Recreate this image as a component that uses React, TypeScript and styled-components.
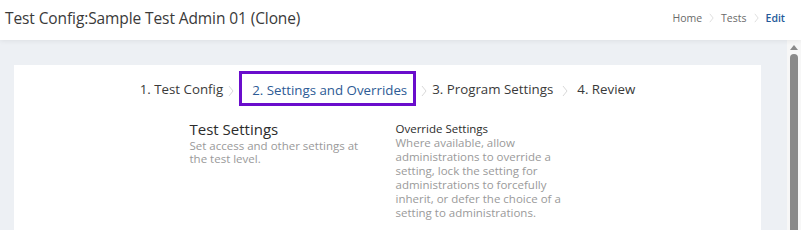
import React from "react";
import styled, { createGlobalStyle } from "styled-components";

const GlobalStyle = createGlobalStyle`
  html, body {
    margin: 0;
    padding: 0;
    height: 100%;
    overflow: hidden;
  }
  body {
    font-family: "Open Sans", "Liberation Sans", sans-serif;
    background: #edf0f4;
  }
`;

const Page = styled.div`
  display: flex;
  flex-direction: column;
  width: 801px;
  height: 230px;
`;

const Header = styled.header`
  height: 40px;
  flex: 0 0 40px;
  display: flex;
  align-items: center;
  justify-content: space-between;
  padding: 0 16px 4px 5px;
  background: #fff;
  box-shadow: 0 1px 5px rgba(0, 0, 0, 0.07);
  box-sizing: border-box;
  position: relative;
  z-index: 1;
`;

const Title = styled.h1`
  margin: 0;
  font-size: 15.5px;
  font-weight: 400;
  color: #3a3a3a;
  letter-spacing: -0.1px;
`;

const Crumbs = styled.nav`
  display: flex;
  align-items: center;
  gap: 7px;
  font-size: 10.5px;
`;

const Crumb = styled.span<{ $active?: boolean }>`
  color: ${(p) => (p.$active ? "#245a9a" : "#6a6a6a")};
  font-weight: ${(p) => (p.$active ? 600 : 400)};
`;

const ChevronIcon = styled.svg<{ $size?: number }>`
  width: ${(p) => (p.$size ?? 6)}px;
  height: ${(p) => (p.$size ?? 6) * 2}px;
  display: block;
`;

const Chevron = ({ size }: { size?: number }) => (
  <ChevronIcon $size={size} viewBox="0 0 6 12" aria-hidden>
    <path d="M1 1 L5 6 L1 11" fill="none" stroke="#d9d9d9" strokeWidth="1" />
  </ChevronIcon>
);

const Body = styled.div`
  flex: 1;
  display: flex;
  min-height: 0;
`;

const Main = styled.main`
  flex: 1;
  padding: 25px 26px 0 14px;
  min-width: 0;
`;

const Card = styled.section`
  background: #fff;
  height: 100%;
  padding-top: 6px;
  box-sizing: border-box;
`;

const Stepper = styled.ol`
  list-style: none;
  margin: 0;
  padding: 0;
  display: flex;
  align-items: center;
  justify-content: center;
  gap: 5px;
`;

const Step = styled.li<{ $current?: boolean }>`
  font-size: 13.3px;
  color: ${(p) => (p.$current ? "#2d5b95" : "#3a3a3a")};
  height: 35px;
  box-sizing: border-box;
  display: flex;
  align-items: center;
  padding: 3px ${(p) => (p.$current ? "6px 0 10px" : "0")};
  border: ${(p) => (p.$current ? "3px solid #6a0dcc" : "none")};
`;

const StepSep = styled.li<{ $wide?: boolean }>`
  padding-top: 4px;
  margin: 0 ${(p) => (p.$wide ? "4px" : "0")};
`;

const Columns = styled.div`
  display: grid;
  grid-template-columns: 186px 190px;
  column-gap: 20px;
  justify-content: center;
  margin-top: 14px;
`;

const Block = styled.div`
  display: flex;
  flex-direction: column;
`;

const Heading = styled.h2<{ $small?: boolean }>`
  margin: 0;
  font-size: ${(p) => (p.$small ? "11.5px" : "15px")};
  font-weight: 500;
  color: #2c2c2c;
  line-height: ${(p) => (p.$small ? "15px" : "19px")};
  margin-top: ${(p) => (p.$small ? "1px" : "0")};
`;

const Desc = styled.p<{ $tight?: boolean }>`
  margin: 0;
  font-size: 11.5px;
  color: #9a9a9a;
  line-height: ${(p) => (p.$tight ? "13px" : "14px")};
`;

const Scrollbar = styled.div`
  width: 14px;
  flex: 0 0 14px;
  background: #f7f7f7;
  display: flex;
  flex-direction: column;
  align-items: center;
  padding-top: 5px;
  gap: 4px;
  box-sizing: border-box;
`;

const Arrow = styled.div`
  width: 0;
  height: 0;
  border-left: 4px solid transparent;
  border-right: 4px solid transparent;
  border-bottom: 5px solid #8a8a8a;
`;

const Thumb = styled.div`
  width: 8px;
  flex: 1;
  background: #8a8a8a;
  border-radius: 4px 4px 0 0;
`;

const steps = [
  "1. Test Config",
  "2. Settings and Overrides",
  "3. Program Settings",
  "4. Review",
];

export default function App() {
  return (
    <>
      <GlobalStyle />
      <Page>
        <Header>
          <Title>Test Config:Sample Test Admin 01 (Clone)</Title>
          <Crumbs>
            <Crumb>Home</Crumb>
            <Chevron size={5} />
            <Crumb>Tests</Crumb>
            <Chevron size={5} />
            <Crumb $active>Edit</Crumb>
          </Crumbs>
        </Header>
        <Body>
          <Main>
            <Card>
              <Stepper>
                {steps.map((s, i) => (
                  <React.Fragment key={s}>
                    {i > 0 && (
                      <StepSep $wide={i === 3}>
                        <Chevron size={6} />
                      </StepSep>
                    )}
                    <Step $current={i === 1}>{s}</Step>
                  </React.Fragment>
                ))}
              </Stepper>
              <Columns>
                <Block>
                  <Heading>Test Settings</Heading>
                  <Desc $tight>Set access and other settings at the test level.</Desc>
                </Block>
                <Block>
                  <Heading $small>Override Settings</Heading>
                  <Desc>
                    Where available, allow administrations to override a setting,
                    lock the setting for administrations to forcefully inherit, or
                    defer the choice of a setting to administrations.
                  </Desc>
                </Block>
              </Columns>
            </Card>
          </Main>
          <Scrollbar>
            <Arrow />
            <Thumb />
          </Scrollbar>
        </Body>
      </Page>
    </>
  );
}
